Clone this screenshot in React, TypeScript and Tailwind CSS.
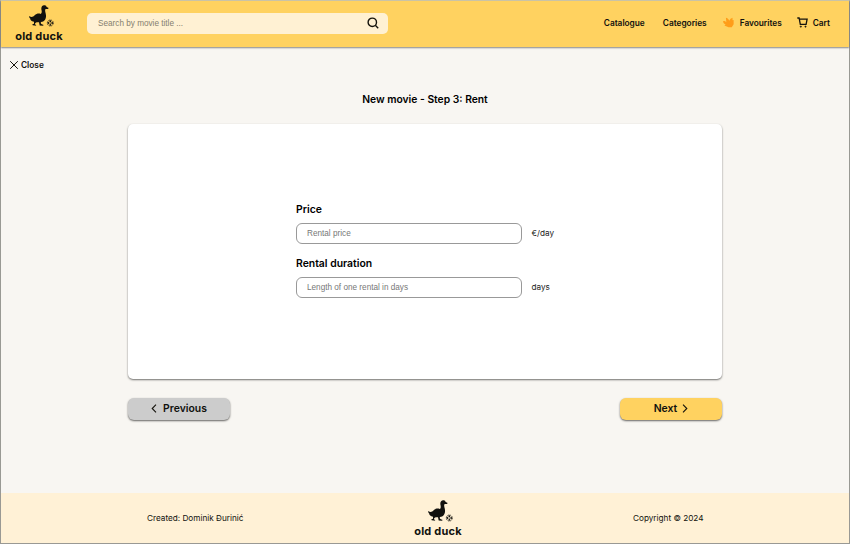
import type { ReactNode } from "react";

function Logo() {
  return (
    <div className="flex w-[48px] flex-col items-center">
      <svg className="h-[22px] w-[26px] translate-x-[3px]" viewBox="87 13 78 66" fill="#11110e">
        <path d="M88 46 C93 51 99 50 104 44 C110 38 117 38 122 40 C127 37 125 31 124 26 C123 18 128 13 134 14 C138 14 139 17 140 19 L146 22 L144 25 L137 25 C133 29 138 37 138 44 C139 55 133 64 123 64 L122 67 L124 70 L131 73 L129 75.5 L119 74.5 L117 65 L110 65 L106 67 L105 70 L109 75 L98 74 L97 71 L102 69 L102 63 C94 61 90 57 91 54 C88 52 87 49 88 46 Z" />
        <circle cx="151" cy="67" r="9" fill="none" stroke="#28251b" strokeWidth="2.4" strokeDasharray="5 2" />
        <circle cx="151" cy="61.5" r="2.7" />
        <circle cx="151" cy="72.5" r="2.7" />
        <circle cx="145.5" cy="67" r="2.7" />
        <circle cx="156.5" cy="67" r="2.7" />
        <circle cx="151" cy="67" r="1.6" />
      </svg>
      <span className="mt-[2px] whitespace-nowrap font-['Inter',sans-serif] text-[11px] font-bold leading-[14px] tracking-[0.2px]">old duck</span>
    </div>
  );
}

function Field({ label, placeholder, unit }: { label: string; placeholder: string; unit: string }) {
  return (
    <div>
      <label className="block text-[10.4px] font-semibold leading-[15px] text-black">{label}</label>
      <div className="mt-[6px] flex items-center gap-[9.5px]">
        <input
          className="h-[21px] w-[226px] rounded-[6px] border border-[#999] bg-white px-[10px] font-['Liberation_Sans',Arial,sans-serif] text-[8.2px] outline-none placeholder:text-[#777]"
          placeholder={placeholder}
        />
        <span className="-mt-[2px] text-[8.2px] leading-[12px] text-[#222]">{unit}</span>
      </div>
    </div>
  );
}

function Chevron({ d }: { d: string }) {
  return (
    <svg className="-mt-px h-[9px] w-[6px]" viewBox="0 0 6 9" fill="none" stroke="#15130c" strokeWidth="1.1">
      <path d={d} />
    </svg>
  );
}

function Action({ color, children }: { color: string; children: ReactNode }) {
  return (
    <button className={`flex h-[22px] w-[102px] items-center justify-center rounded-[6px] text-[10.4px] font-semibold shadow-[0_1px_2px_rgba(0,0,0,0.6)] ${color}`}>
      {children}
    </button>
  );
}

export default function App() {
  return (
    <div className="flex h-[544px] w-[850px] flex-col border border-[#999994] border-t-[#cdc6a8] bg-[#f8f6f2] font-['Inter',sans-serif] text-[#11110e]">
      <header className="flex h-[46px] shrink-0 items-center bg-[#ffd260] pl-[14px] pr-[19px] shadow-[0_1px_1.5px_rgba(0,0,0,0.45)]">
        <Logo />
        <div className="-mt-px ml-[24px] flex h-[21px] w-[301px] items-center rounded-[5px] bg-[#fff1d3] pl-[11px] pr-[9px]">
          <input
            className="min-w-0 flex-1 bg-transparent pt-px font-['Liberation_Sans',Arial,sans-serif] text-[8.2px] outline-none placeholder:text-[#85806f]"
            placeholder="Search by movie title ..."
          />
          <svg className="-mt-px h-[12px] w-[12px]" viewBox="0 0 12 12" fill="none" stroke="#15130c" strokeWidth="1.4">
            <circle cx="5.3" cy="5.3" r="4.2" />
            <path d="m8.3 8.3 2.9 2.9" />
          </svg>
        </div>
        <nav className="-mt-[2px] ml-auto flex items-center text-[8.3px] font-semibold leading-[12px]">
          <a>Catalogue</a>
          <a className="ml-[18px]">Categories</a>
          <a className="ml-[16px] flex items-center gap-[6px]">
            <svg className="-mt-px h-[11px] w-[11px]" viewBox="0 0 30 30" fill="#ff9d19">
              <path d="M0 12 C3 10 6 11 9 14 L8 2 C12 2 15 6 17 10 C19 6 22 3 26 2 L26 9 L29 8 L29 20 L24 28 L15 28 L4 23 L7 20 C4 19 1 16 0 12 Z" />
            </svg>
            Favourites
          </a>
          <a className="ml-[15px] flex items-center gap-[5px]">
            <svg className="-mt-px h-[11px] w-[11px]" viewBox="0 0 11 11" fill="none" stroke="#15130c" strokeWidth="1.3">
              <path d="M0.3 1h1.8l1.2 6.3h5.8l1-5.2H2.4" />
              <circle cx="3.8" cy="9.6" r="0.7" fill="#15130c" strokeWidth="0.5" />
              <circle cx="8.5" cy="9.6" r="0.7" fill="#15130c" strokeWidth="0.5" />
            </svg>
            Cart
          </a>
        </nav>
      </header>

      <main className="flex flex-1 flex-col">
        <button className="ml-[9px] mt-[12px] flex items-center gap-[3px] self-start text-[8.3px] font-semibold leading-[12px]">
          <svg className="h-[8px] w-[8px]" viewBox="0 0 8 8" stroke="#15130c" strokeWidth="1">
            <path d="m.2.2 7.6 7.6M7.8.2.2 7.8" />
          </svg>
          Close
        </button>
        <h1 className="mt-[21px] text-center text-[10.3px] font-semibold leading-[14px] text-black">New movie - Step 3: Rent</h1>
        <section className="mx-auto mt-[18px] h-[255px] w-[594px] rounded-[5px] bg-white pl-[168px] pt-[78px] shadow-[0_1px_2px_rgba(0,0,0,0.55)]">
          <div className="flex flex-col gap-[12px]">
            <Field label="Price" placeholder="Rental price" unit="€/day" />
            <Field label="Rental duration" placeholder="Length of one rental in days" unit="days" />
          </div>
        </section>
        <div className="mx-auto mt-[19px] flex w-[594px] justify-between">
          <Action color="bg-[#cccccc]">
            <Chevron d="M5 .7 1.2 4.5 5 8.3" />
            <span className="ml-[6px]">Previous</span>
          </Action>
          <Action color="bg-[#ffd260]">
            <span className="mr-[5px]">Next</span>
            <Chevron d="m1 .7 3.8 3.8L1 8.3" />
          </Action>
        </div>
      </main>

      <footer className="flex h-[50px] shrink-0 items-center bg-[#fff1d6] text-[8.2px] leading-[12px]">
        <span className="ml-[146px] w-[267px]">Created: Dominik Đurinić</span>
        <div className="mt-[2px]">
          <Logo />
        </div>
        <span className="ml-[171px]">Copyright © 2024</span>
      </footer>
    </div>
  );
}
